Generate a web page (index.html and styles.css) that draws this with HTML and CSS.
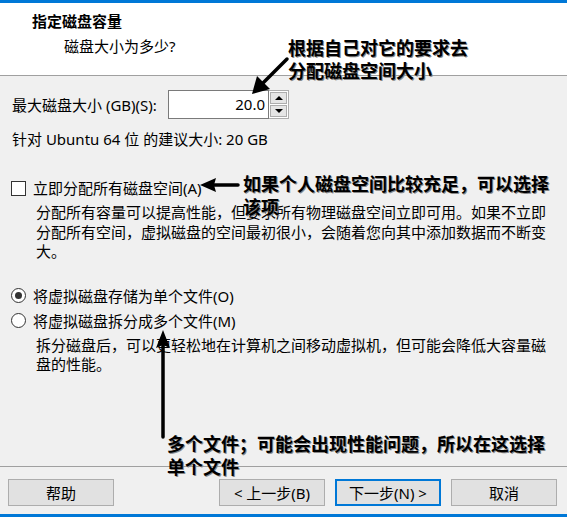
FILE: index.html
```html
<!DOCTYPE html>
<html lang="zh-CN">
<head>
<meta charset="utf-8">
<title>指定磁盘容量</title>
<link rel="stylesheet" href="styles.css">
</head>
<body>
<div class="window">
  <div class="topbar"></div>
  <header class="header">
    <div class="title">指定磁盘容量</div>
    <div class="subtitle">磁盘大小为多少?</div>
  </header>
  <main class="main">
    <div class="size-row">
      <label class="size-label">最大磁盘大小 (GB)(S):</label>
      <div class="spin">
        <div class="spin-value">20.0</div>
        <div class="spin-btns">
          <div class="spin-btn"><span class="tri-up"></span></div>
          <div class="spin-btn"><span class="tri-down"></span></div>
        </div>
      </div>
    </div>
    <div class="recommend">针对 Ubuntu 64 位 的建议大小: 20 GB</div>

    <div class="option check-row">
      <span class="checkbox"></span>
      <span class="opt-label">立即分配所有磁盘空间(A)</span>
    </div>
    <p class="desc">分配所有容量可以提高性能，但要求所有物理磁盘空间立即可用。如果不立即<br>分配所有空间，虚拟磁盘的空间最初很小，会随着您向其中添加数据而不断变<br>大。</p>

    <div class="option radio-row first">
      <span class="radio checked"></span>
      <span class="opt-label">将虚拟磁盘存储为单个文件(O)</span>
    </div>
    <div class="option radio-row">
      <span class="radio"></span>
      <span class="opt-label">将虚拟磁盘拆分成多个文件(M)</span>
    </div>
    <p class="desc desc2">拆分磁盘后，可以更轻松地在计算机之间移动虚拟机，但可能会降低大容量磁<br>盘的性能。</p>
  </main>
  <footer class="footer">
    <button class="btn">帮助</button>
    <div class="spacer"></div>
    <button class="btn">&lt; 上一步(B)</button>
    <button class="btn default">下一步(N) &gt;</button>
    <button class="btn">取消</button>
  </footer>
  <div class="bottombar"></div>

  <svg class="arrows" width="567" height="517" viewBox="0 0 567 517">
    <g stroke="#000" stroke-width="3.5" stroke-linecap="round" fill="none">
      <line x1="287" y1="59" x2="262" y2="84"/>
      <line x1="238" y1="185" x2="212" y2="185"/>
      <line x1="163" y1="437" x2="163" y2="344"/>
    </g>
    <g fill="#000">
      <polygon points="252,94 257,76 270,89"/>
      <polygon points="200,185 216,178 214,185 216,192"/>
      <polygon points="163,330 156,348 163,345 170,348"/>
    </g>
  </svg>
  <div class="note note1">根据自己对它的要求去<br>分配磁盘空间大小</div>
  <div class="note note2">如果个人磁盘空间比较充足，可以选择<br>该项</div>
  <div class="note note3">多个文件；可能会出现性能问题，所以在这选择<br>单个文件</div>
</div>
</body>
</html>
```
FILE: styles.css
```css
* { box-sizing: border-box; }
html, body { margin: 0; padding: 0; }
body {
  width: 567px;
  height: 517px;
  overflow: hidden;
  background: #f0f0f0;
  font-family: "Noto Sans", "Noto Sans CJK SC", sans-serif;
  font-size: 15px;
  color: #000;
}
.window {
  position: relative;
  width: 567px;
  height: 517px;
  display: flex;
  flex-direction: column;
}
.topbar { height: 3px; background: #0078d7; flex: none; }
.header {
  height: 73px;
  flex: none;
  background: #fff;
  border-bottom: 1px solid #a0a0a0;
  padding: 8px 0 0 32px;
}
.title {
  font-weight: 700;
  font-size: 15px;
  line-height: 20px;
}
.subtitle {
  margin: 5px 0 0 32px;
  line-height: 20px;
}
.main {
  flex: 1;
  padding: 14px 0 0 12px;
}
.size-row {
  display: flex;
  align-items: center;
  height: 29px;
}
.size-label { line-height: 20px; width: 156px; }
.spin {
  display: flex;
  height: 29px;
}
.spin-value {
  width: 101px;
  height: 29px;
  background: #fff;
  border: 1px solid #7a7a7a;
  text-align: right;
  padding-right: 3px;
  line-height: 26px;
}
.spin-btns {
  display: flex;
  flex-direction: column;
  width: 20px;
  border: 1px solid #adadad;
  border-left: none;
  background: #fff;
  padding: 1px;
  gap: 1px;
}
.spin-btn {
  flex: 1;
  background: #e5e5e5;
  border: 1px solid #adadad;
  display: flex;
  align-items: center;
  justify-content: center;
}
.tri-up, .tri-down {
  width: 0; height: 0;
  border-left: 4px solid transparent;
  border-right: 4px solid transparent;
}
.tri-up { border-bottom: 4px solid #000; }
.tri-down { border-top: 4px solid #000; }
.recommend {
  margin-top: 10px;
  line-height: 20px;
}
.option {
  display: flex;
  align-items: center;
  height: 20px;
}
.check-row { margin-top: 29px; margin-left: -1px; }
.checkbox {
  width: 15px; height: 15px;
  border: 1px solid #333;
  background: #fff;
  margin-right: 7px;
}
.opt-label { line-height: 20px; }
.desc {
  margin: 5px 0 0 24px;
  line-height: 19.5px;
}
.radio-row.first { margin-top: 24px; }
.radio-row { margin-top: 5px; margin-left: -1px; }
.radio {
  width: 15px; height: 15px;
  border: 1px solid #333;
  border-radius: 50%;
  background: #fff;
  margin-right: 7px;
  display: flex;
  align-items: center;
  justify-content: center;
}
.radio.checked::after {
  content: "";
  width: 7px; height: 7px;
  border-radius: 50%;
  background: #333;
}
.desc2 { margin-top: 5px; }
.footer {
  flex: none;
  border-top: 1px solid #a0a0a0;
  height: 48px;
  display: flex;
  align-items: flex-start;
  padding: 12px 10px 0 8px;
  gap: 10px;
}
.spacer { flex: 1; }
.btn {
  width: 106px;
  height: 27px;
  background: #e1e1e1;
  border: 1px solid #adadad;
  font-family: inherit;
  font-size: 15px;
  color: #000;
  padding: 0;
  line-height: 24px;
}
.btn.default { border: 2px solid #0078d7; }
.bottombar { height: 3px; background: #0078d7; flex: none; margin-top: auto; }
.arrows {
  position: absolute;
  left: 0; top: 0;
  pointer-events: none;
}
.note {
  position: absolute;
  font-family: "Noto Sans CJK SC", sans-serif;
  font-weight: 700;
  font-size: 18px;
  line-height: 23px;
  color: #000;
  text-shadow: 1px 1px 0 #888;
  white-space: nowrap;
}
.note1 { left: 288px; top: 36px; }
.note2 { left: 243px; top: 172px; }
.note3 { left: 167px; top: 432px; }
```
